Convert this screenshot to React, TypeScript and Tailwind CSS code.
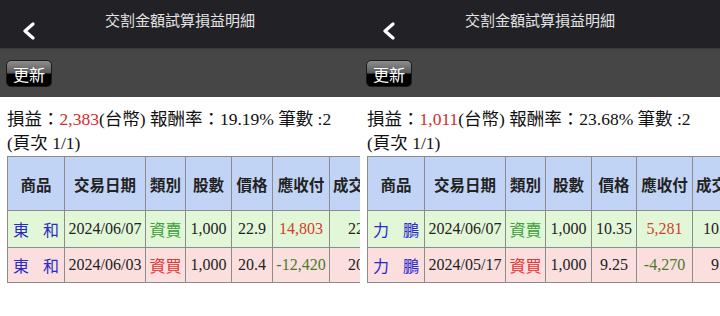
const serif = "font-['Liberation_Serif','Noto_Sans_CJK_TC',serif]";

type Row = {
  name: [string, string];
  date: string;
  kind: string;
  qty: string;
  price: string;
  amount: string;
  deal: string;
};

type Panel = {
  pnl: string;
  rate: string;
  widths: number[];
  rows: Row[];
};

const panels: Panel[] = [
  {
    pnl: "2,383",
    rate: "19.19%",
    widths: [57, 81, 40, 46, 41, 57, 50],
    rows: [
      { name: ["東", "和"], date: "2024/06/07", kind: "資賣", qty: "1,000", price: "22.9", amount: "14,803", deal: "22.9" },
      { name: ["東", "和"], date: "2024/06/03", kind: "資買", qty: "1,000", price: "20.4", amount: "-12,420", deal: "20.4" },
    ],
  },
  {
    pnl: "1,011",
    rate: "23.68%",
    widths: [57, 81, 40, 46, 45, 56, 50],
    rows: [
      { name: ["力", "鵬"], date: "2024/06/07", kind: "資賣", qty: "1,000", price: "10.35", amount: "5,281", deal: "10.35" },
      { name: ["力", "鵬"], date: "2024/05/17", kind: "資買", qty: "1,000", price: "9.25", amount: "-4,270", deal: "9.25" },
    ],
  },
];

const heads = ["商品", "交易日期", "類別", "股數", "價格", "應收付", "成交價"];

function Screen({ p }: { p: Panel }) {
  return (
    <div className="w-[360px] h-[316px] overflow-hidden bg-white shrink-0">
      <div className="relative h-[48px] bg-[#222226]">
        <svg
          className="absolute left-[21px] top-[22px]"
          width="16"
          height="18"
          viewBox="0 0 16 18"
        >
          <polyline
            points="12,2 4,9 12,16"
            fill="none"
            stroke="#ffffff"
            strokeWidth="3.2"
            strokeLinecap="round"
            strokeLinejoin="round"
          />
        </svg>
        <div className="pt-[10px] text-center text-[15px] leading-[20px] text-[#e4e4e4] font-['Noto_Sans_CJK_TC',sans-serif]">
          交割金額試算損益明細
        </div>
      </div>

      <div className="h-[49px] bg-[#464646] border-t border-[#3a3a3a] pt-[11px] pl-[6px]">
        <div className="w-[46px] h-[27px] rounded-[5px] border border-[#1a1a1a] bg-[linear-gradient(to_bottom,#8e8e8e_0%,#5a5a5a_48%,#000_52%,#000_100%)] flex items-center justify-center text-white text-[16px] font-['Noto_Sans_CJK_TC',sans-serif]">
          更新
        </div>
      </div>

      <div className={`pt-[10px] pl-[7px] text-[17.5px] leading-[24px] text-[#111] whitespace-nowrap ${serif}`}>
        <div>
          損益：<span className="text-[#d42b2b]">{p.pnl}</span>(台幣) 報酬率：{p.rate} 筆數 :2
        </div>
        <div>(頁次 1/1)</div>
      </div>

      <table className="ml-[7px] mt-[1px] table-fixed border-collapse" style={{ width: p.widths.reduce((a, b) => a + b, 0) }}>
        <colgroup>
          {p.widths.map((w, i) => (
            <col key={i} style={{ width: w }} />
          ))}
        </colgroup>
        <thead>
          <tr className="h-[54px] bg-[#c2d4f6]">
            {heads.map((h, i) => (
              <th
                key={h}
                className={`border border-[#8c8c8c] text-[15.5px] leading-[18px] font-bold text-[#222] whitespace-nowrap font-['Noto_Sans_CJK_TC',sans-serif] ${
                  i === heads.length - 1 ? "text-left pl-[3px]" : "px-[2px]"
                }`}
              >
                {h}
              </th>
            ))}
          </tr>
        </thead>
        <tbody className={`text-[16px] text-[#222] ${serif}`}>
          {p.rows.map((r, i) => {
            const buy = r.kind === "資買";
            return (
              <tr key={i} className={i === 0 ? "h-[37px] bg-[#e2f7d8]" : "h-[35px] bg-[#fbdede]"}>
                <td className="border border-[#8c8c8c] px-[5px]">
                  <div className="flex justify-between text-[16px] text-[#2a2ac8] font-['Noto_Sans_CJK_TC',sans-serif]">
                    <span>{r.name[0]}</span>
                    <span>{r.name[1]}</span>
                  </div>
                </td>
                <td className="border border-[#8c8c8c] text-center">{r.date}</td>
                <td
                  className={`border border-[#8c8c8c] text-center text-[16px] font-['Noto_Sans_CJK_TC',sans-serif] ${
                    buy ? "text-[#e53232]" : "text-[#3aa03a]"
                  }`}
                >
                  {r.kind}
                </td>
                <td className="border border-[#8c8c8c] text-center">{r.qty}</td>
                <td className="border border-[#8c8c8c] text-center">{r.price}</td>
                <td className={`border border-[#8c8c8c] text-center ${buy ? "text-[#4b7a2c]" : "text-[#d2402e]"}`}>
                  {r.amount}
                </td>
                <td className="border border-[#8c8c8c] text-right pr-[3px]">{r.deal}</td>
              </tr>
            );
          })}
        </tbody>
      </table>
    </div>
  );
}

export default function App() {
  return (
    <div className="flex w-[720px] h-[316px] bg-white">
      {panels.map((p, i) => (
        <Screen key={i} p={p} />
      ))}
    </div>
  );
}
